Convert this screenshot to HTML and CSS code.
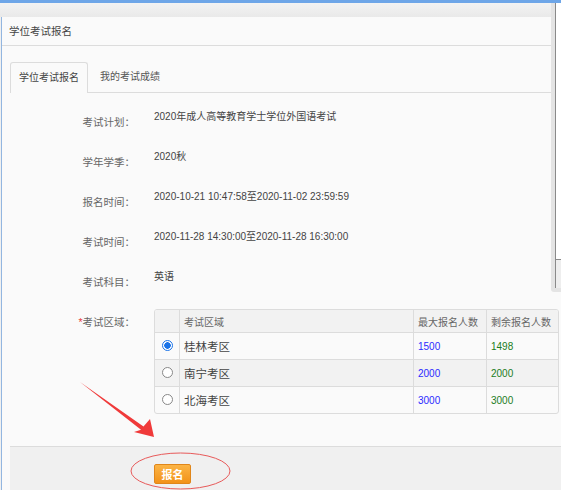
FILE: index.html
```html
<!DOCTYPE html>
<html lang="zh-CN">

<head>
    <meta charset="UTF-8">
    <title>学位考试报名</title>
    <link rel="stylesheet" href="styles.css">
</head>

<body>

    <div class="topbar"></div>
    <div class="strip"></div>

    <div class="panel">
        <div class="panel-head">学位考试报名</div>

        <div class="panel-body">
            <div class="tabs">
                <div class="tab active">学位考试报名</div>
                <div class="tab">我的考试成绩</div>
            </div>

            <div class="form">
                <div class="row">
                    <div class="label">考试计划<span class="colon">：</span></div>
                    <div class="value">2020年成人高等教育学士学位外国语考试</div>
                </div>
                <div class="row">
                    <div class="label">学年学季<span class="colon">：</span></div>
                    <div class="value">2020秋</div>
                </div>
                <div class="row">
                    <div class="label">报名时间<span class="colon">：</span></div>
                    <div class="value">2020-10-21 10:47:58至2020-11-02 23:59:59</div>
                </div>
                <div class="row">
                    <div class="label">考试时间<span class="colon">：</span></div>
                    <div class="value">2020-11-28 14:30:00至2020-11-28 16:30:00</div>
                </div>
                <div class="row">
                    <div class="label">考试科目<span class="colon">：</span></div>
                    <div class="value">英语</div>
                </div>
                <div class="row">
                    <div class="label"><span class="req">*</span>考试区域<span class="colon">：</span></div>
                    <div class="area-table">
                        <table>
                            <tr class="head">
                                <td class="c-radio"></td>
                                <td class="c-name">考试区域</td>
                                <td class="c-num c-max">最大报名人数</td>
                                <td class="c-num">剩余报名人数</td>
                            </tr>
                            <tr>
                                <td class="c-radio"><input type="radio" name="area" checked></td>
                                <td class="c-name">桂林考区</td>
                                <td class="c-num c-max max">1500</td>
                                <td class="c-num left">1498</td>
                            </tr>
                            <tr class="odd">
                                <td class="c-radio"><input type="radio" name="area"></td>
                                <td class="c-name">南宁考区</td>
                                <td class="c-num c-max max">2000</td>
                                <td class="c-num left">2000</td>
                            </tr>
                            <tr>
                                <td class="c-radio"><input type="radio" name="area"></td>
                                <td class="c-name">北海考区</td>
                                <td class="c-num c-max max">3000</td>
                                <td class="c-num left">3000</td>
                            </tr>
                        </table>
                    </div>
                </div>
            </div>

            <div class="footer">
                <button class="btn-submit">报名</button>
            </div>
        </div>
    </div>

    <!-- bord de la fenêtre voisine -->
    <div class="edge">
        <div class="edge-top"></div>
        <div class="edge-low"></div>
    </div>

    <!-- annotations rouges -->
    <svg class="marks" width="561" height="490" viewBox="0 0 561 490">
        <polygon points="80,382 143.5,426.5 150,419 154,437 134,432 141,429.8" fill="#f03a3a" />
        <ellipse cx="180.5" cy="471" rx="49.5" ry="18" fill="none" stroke="#e85a5a" stroke-width="1" />
    </svg>

</body>

</html>
```

FILE: styles.css
```css
body {
    margin: 0;
    height: 490px;
    overflow: hidden;
    background-color: #f0f0f0;
    font-family: "Liberation Sans", "Noto Sans CJK SC", sans-serif;
    display: flex;
    flex-direction: column;
}

.topbar {
    height: 3px;
    background-color: #6ea6e8;
}

.strip {
    height: 14px;
    background: linear-gradient(#f3f3f3, #e9e9e9);
}

.panel {
    flex: 1;
    margin-left: 1px;
    border-left: 1px solid #93b6e0;
    background-color: #fafafa;
    display: flex;
    flex-direction: column;
}

.panel-head {
    height: 28px;
    line-height: 28px;
    padding-left: 7px;
    border-bottom: 1px solid #dcdcdc;
    font-size: 10.5px;
    color: #444;
}

.panel-body {
    flex: 1;
    padding: 16px 0 0 8px;
    display: flex;
    flex-direction: column;
}

/* onglets */
.tabs {
    display: flex;
    height: 30px;
    border-bottom: 1px solid #dcdcdc;
}

.tab {
    height: 30px;
    line-height: 30px;
    padding: 0 8px;
    font-size: 10px;
    color: #555;
}

.tab.active {
    height: 30px;
    border: 1px solid #dcdcdc;
    border-bottom: none;
    border-radius: 3px 3px 0 0;
    background-color: #fafafa;
    margin-bottom: -1px;
    line-height: 29px;
    color: #444;
}

.tab + .tab {
    margin-left: 4px;
}

/* formulaire */
.form {
    margin-top: 16px;
}

.row {
    display: flex;
    gap: 19px;
    min-height: 40px;
}

.label {
    width: 125px;
    text-align: right;
    padding-top: 5px;
    line-height: 16px;
    font-size: 10.5px;
    color: #666;
}

.colon {
    font-family: "Noto Sans CJK TC", sans-serif;
}

.req {
    color: #e84040;
}

.value {
    line-height: 16px;
    font-size: 10px;
    color: #444;
}

.area-table {
    width: 403px;
    border: 1px solid #dcdcdc;
    border-radius: 3px;
    overflow: hidden;
}

.area-table table {
    width: 100%;
    border-collapse: collapse;
}

.area-table td {
    border-left: 1px solid #dcdcdc;
    border-top: 1px solid #dcdcdc;
    padding: 0 0 0 4px;
    height: 26px;
    text-align: left;
}

.area-table td:first-child {
    border-left: none;
}

.area-table tr:first-child td {
    border-top: none;
}

.area-table tr.head td {
    height: 22px;
    background-color: #f2f2f2;
    font-size: 10px;
    color: #666;
}

.area-table tr.odd td {
    background-color: #f2f2f2;
}

.area-table td.c-radio {
    width: 24px;
    text-align: center;
    padding: 0;
}

.area-table td.c-name {
    width: 229px;
    font-size: 11.5px;
    color: #444;
}

.c-num {
    font-size: 10px;
}

.area-table td.c-max {
    width: 68px;
}

.max {
    color: #2a2aff;
}

.left {
    color: #1c7d1c;
}

input[type="radio"] {
    appearance: none;
    width: 11px;
    height: 11px;
    margin: 3px 0 0 1px;
    border: 1px solid #888;
    border-radius: 50%;
    background-color: #fff;
}

input[type="radio"]:checked {
    border-color: #1a73e8;
    background: radial-gradient(circle, #1a73e8 0, #1a73e8 3px, #fff 3.5px);
}

/* pied */
.footer {
    flex: 1;
    margin-top: 32px;
    border-top: 1px solid #dcdcdc;
    background-color: #f0f0f0;
    padding: 17px 0 0 144px;
}

.btn-submit {
    display: block;
    width: 37px;
    height: 20px;
    padding: 0;
    border: 1px solid #e0861a;
    border-radius: 2px;
    background: linear-gradient(#fbb445, #f29218);
    color: #fff;
    font-family: inherit;
    font-size: 11px;
    font-weight: bold;
}

.edge {
    position: absolute;
    left: 551px;
    top: 3px;
    width: 10px;
    height: 289px;
    background-color: #e4e4e4;
    border-bottom-left-radius: 3px;
}

.edge-top {
    margin-left: 4px;
    height: 256px;
    background-color: #fff;
    border-left: 1px solid #8a8a8a;
}

.edge-low {
    margin-left: 4px;
    height: 28px;
    background-color: #eee;
    border-left: 1px solid #8a8a8a;
    border-top: 1px solid #8a8a8a;
}

.marks {
    position: absolute;
    top: 0;
    left: 0;
    pointer-events: none;
}
```
